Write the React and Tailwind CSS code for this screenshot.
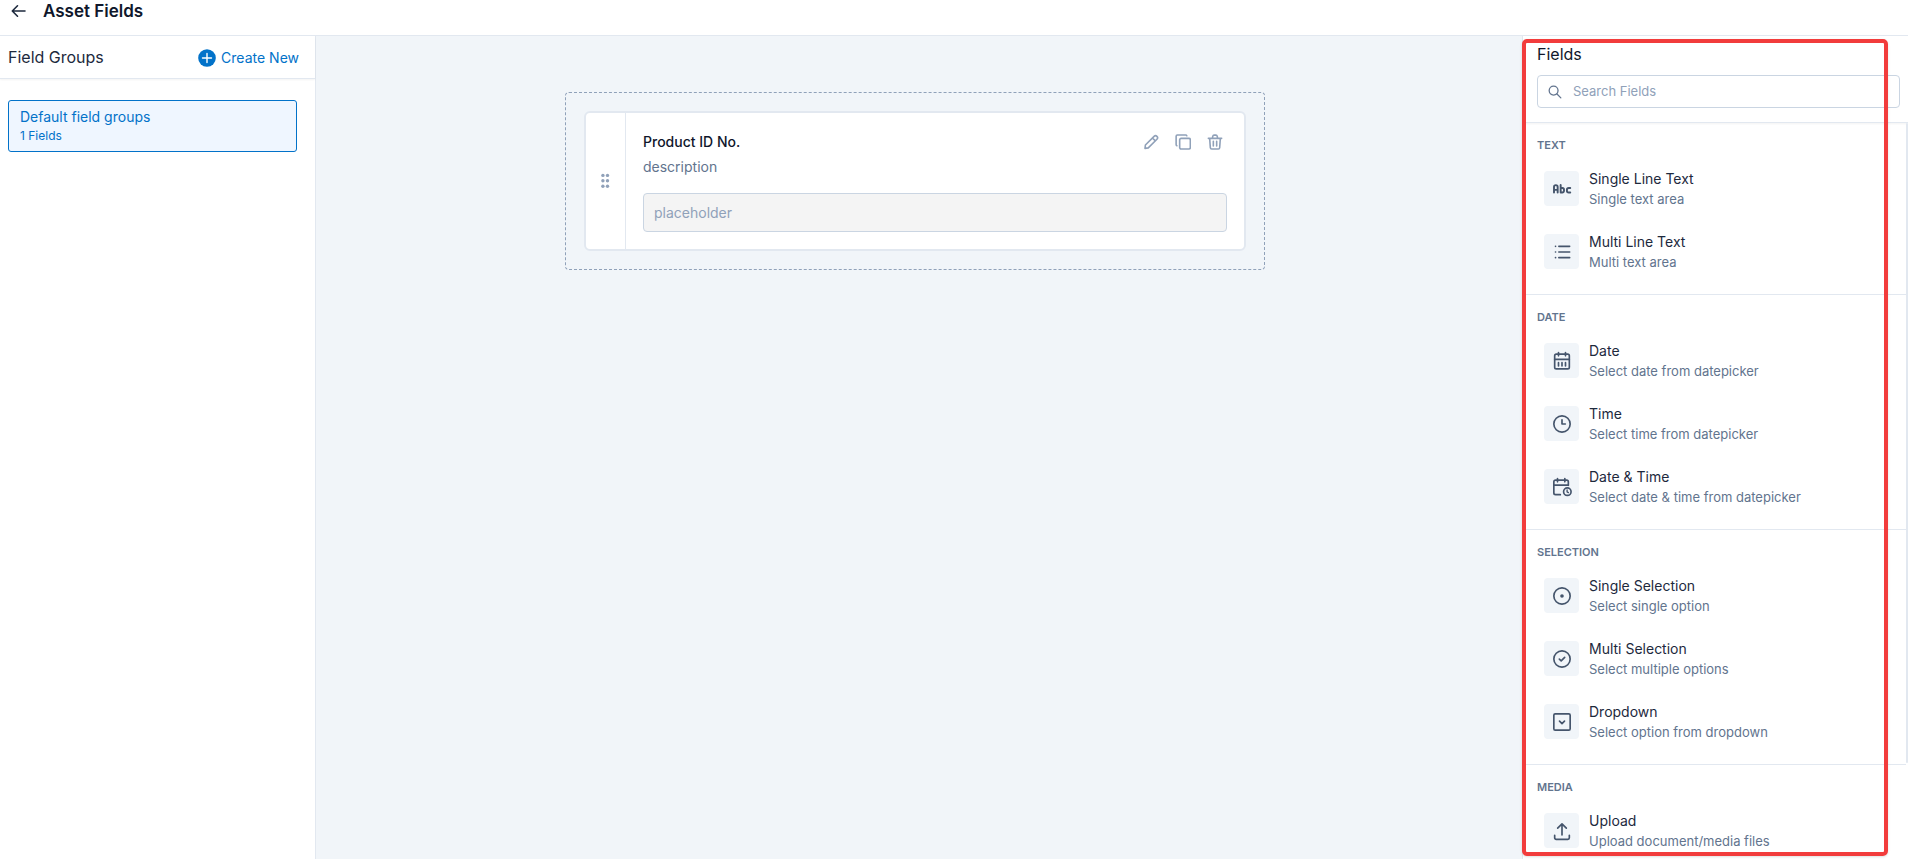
import React, { useState } from "react";
import clsx from "clsx";

function Icon({ className = "w-5 h-5", strokeWidth = 2, children }) {
  return (
    <svg
      className={className}
      viewBox="0 0 24 24"
      fill="none"
      stroke="currentColor"
      strokeWidth={strokeWidth}
      strokeLinecap="round"
      strokeLinejoin="round"
      aria-hidden="true"
    >
      {children}
    </svg>
  );
}

const AbcIcon = () => (
  <Icon strokeWidth={2.3}>
    <path d="M2.4 16.2V9.5a2.2 2.2 0 0 1 4.4 0v6.7M2.4 13h4.4" />
    <path d="M10.4 7.2v9M10.4 10.8h2a2 2 0 0 1 2 2v1.4a2 2 0 0 1-2 2h-2" />
    <path d="M21.9 10.8h-1.8a2.2 2.2 0 0 0-2.2 2.2v1a2.2 2.2 0 0 0 2.2 2.2h1.8" />
  </Icon>
);

const ListIcon = () => (
  <Icon>
    <path d="M8.2 5.2h13M8.2 12h13M8.2 18.8h13" />
    <path d="M4.2 5.2h.1M4.2 12h.1M4.2 18.8h.1" />
  </Icon>
);

const CalendarIcon = () => (
  <Icon>
    <rect x="3.2" y="3.8" width="17.6" height="17.6" rx="2" />
    <path d="M3.2 10h17.6M7.8 1.8v4M16.2 1.8v4M7.8 14v4M12 14v4M16.2 14v4" />
  </Icon>
);

const ClockIcon = () => (
  <Icon>
    <circle cx="12" cy="12" r="9.8" />
    <path d="M12 7v5h4" />
  </Icon>
);

const CalendarClockIcon = () => (
  <Icon>
    <path d="M10 21.2H4.2a2 2 0 0 1-2-2V5.8a2 2 0 0 1 2-2h13.4a2 2 0 0 1 2 2V10" />
    <path d="M2.2 9.8h17.4M6.6 1.8v4M15.4 1.8v4" />
    <circle cx="18.4" cy="17.6" r="4.5" />
    <path d="M18.1 15.6v2.3l1.6.9" strokeWidth="1.6" />
  </Icon>
);

const RadioIcon = () => (
  <Icon>
    <circle cx="12" cy="12" r="9.8" />
    <circle cx="12" cy="12" r="1.2" fill="currentColor" />
  </Icon>
);

const CheckCircleIcon = () => (
  <Icon>
    <circle cx="12" cy="12" r="9.8" />
    <path d="M8.8 12.2l2.2 2.1 4.2-4.2" />
  </Icon>
);

const DropdownIcon = () => (
  <Icon>
    <rect x="2.2" y="2.2" width="19.6" height="19.6" rx="1.6" />
    <path d="M9 11l3 3 3-3" />
  </Icon>
);

const UploadIcon = () => (
  <Icon>
    <path d="M3.2 17.2v3a1.8 1.8 0 0 0 1.8 1.8h14a1.8 1.8 0 0 0 1.8-1.8v-3" />
    <path d="M12 16.8V3.6M6.8 8.6L12 3.4l5.2 5.2" />
  </Icon>
);

const PencilIcon = () => (
  <Icon className="w-4 h-4" strokeWidth={2.4}>
    <path d="M3 21.5l.6-5L16.6 3.5a3 3 0 0 1 4.3 4.3L7.9 20.8l-4.9.7zM14.2 6l4.3 4.3" />
  </Icon>
);

const CopyIcon = () => (
  <Icon className="w-4 h-4" strokeWidth={2.4}>
    <rect x="7" y="6.5" width="16" height="16" rx="2.2" />
    <path d="M2.8 17.5a1.8 1.8 0 0 1-1.1-1.7V3.3a1.8 1.8 0 0 1 1.8-1.8H16a1.8 1.8 0 0 1 1.7 1.1" />
  </Icon>
);

const TrashIcon = () => (
  <Icon className="w-4 h-4" strokeWidth={2.4}>
    <path d="M2 6.5h20M4 6.5l1 14a2 2 0 0 0 2 1.9h10a2 2 0 0 0 2-1.9l1-14M8 6.5l.7-3.3a2 2 0 0 1 1.9-1.5h2.8a2 2 0 0 1 1.9 1.5l.7 3.3M9.5 11v7M14.5 11v7" />
  </Icon>
);

const fieldSections = [
  {
    title: "Text",
    fields: [
      { name: "Single Line Text", description: "Single text area", icon: AbcIcon },
      { name: "Multi Line Text", description: "Multi text area", icon: ListIcon },
    ],
  },
  {
    title: "Date",
    fields: [
      { name: "Date", description: "Select date from datepicker", icon: CalendarIcon },
      { name: "Time", description: "Select time from datepicker", icon: ClockIcon },
      { name: "Date & Time", description: "Select date & time from datepicker", icon: CalendarClockIcon },
    ],
  },
  {
    title: "Selection",
    fields: [
      { name: "Single Selection", description: "Select single option", icon: RadioIcon },
      { name: "Multi Selection", description: "Select multiple options", icon: CheckCircleIcon },
      { name: "Dropdown", description: "Select option from dropdown", icon: DropdownIcon },
    ],
  },
  {
    title: "Media",
    fields: [
      { name: "Upload", description: "Upload document/media files", icon: UploadIcon },
    ],
  },
];

const fieldActions = [
  { label: "Edit field", icon: PencilIcon },
  { label: "Duplicate field", icon: CopyIcon },
  { label: "Delete field", icon: TrashIcon },
];

function Header() {
  return (
    <header className="flex h-9 shrink-0 items-start gap-[15px] border-b border-slate-200 bg-white pl-2">
      <button type="button" aria-label="Back" className="flex h-[22px] w-5 items-center justify-center text-slate-800">
        <svg className="h-4 w-4" viewBox="0 0 16 16" fill="none" stroke="currentColor" strokeWidth="1.6" strokeLinecap="round" strokeLinejoin="round" aria-hidden="true">
          <path d="M15 8H2.5M7.5 2.8L2.3 8l5.2 5.2" />
        </svg>
      </button>
      <h1 className="text-[17px] leading-[22px] font-semibold text-slate-900">Asset Fields</h1>
    </header>
  );
}

function GroupsPanel() {
  return (
    <aside className="flex w-[316px] shrink-0 flex-col border-r border-slate-200 bg-white">
      <div className="flex h-[43px] items-center justify-between border-b border-slate-200 pr-4 pl-2 shadow-xs">
        <h2 className="text-base leading-5 text-slate-800">Field Groups</h2>
        <button type="button" className="flex items-center gap-[5px] pt-px text-sm text-[#0272c9]">
          <svg className="h-[18px] w-[18px]" viewBox="0 0 18 18" aria-hidden="true">
            <circle cx="9" cy="9" r="8.8" fill="currentColor" />
            <path d="M9 4.5v9M4.5 9h9" stroke="#fff" strokeWidth="1.4" strokeLinecap="round" />
          </svg>
          Create New
        </button>
      </div>
      <button
        type="button"
        className="mt-[21px] mr-[18px] ml-2 flex flex-col rounded-[3px] border border-[#0272c9] bg-blue-50 px-[11px] py-[6px] text-left text-[#0272c9]"
      >
        <span className="text-sm">Default field groups</span>
        <span className="text-xs leading-[18px]">1 Fields</span>
      </button>
    </aside>
  );
}

function FieldCard() {
  return (
    <div className="flex rounded-md border-2 border-slate-200 bg-white">
      <div className="flex w-10 shrink-0 items-center justify-center border-r border-slate-200 text-slate-400">
        <svg className="h-4 w-[9px]" viewBox="0 0 9 16" fill="currentColor" aria-hidden="true">
          <circle cx="1.9" cy="2.4" r="1.7" />
          <circle cx="6.5" cy="2.4" r="1.7" />
          <circle cx="1.9" cy="7.8" r="1.7" />
          <circle cx="6.5" cy="7.8" r="1.7" />
          <circle cx="1.9" cy="13.2" r="1.7" />
          <circle cx="6.5" cy="13.2" r="1.7" />
        </svg>
      </div>
      <div className="flex-1 p-[17px]">
        <div className="flex items-start justify-between">
          <div>
            <label htmlFor="product-id" className="block text-sm leading-6 font-medium text-slate-900">
              Product ID No.
            </label>
            <p className="text-sm leading-[26px] text-slate-500">description</p>
          </div>
          <div className="flex gap-4 pt-1 pr-1 text-slate-400">
            {fieldActions.map((action) => (
              <button key={action.label} type="button" aria-label={action.label}>
                <action.icon />
              </button>
            ))}
          </div>
        </div>
        <input
          id="product-id"
          type="text"
          disabled
          placeholder="placeholder"
          className="mt-[13px] block h-[39px] w-full rounded border border-slate-300 bg-[#f4f4f4] px-[10px] text-sm placeholder:text-slate-400"
        />
      </div>
    </div>
  );
}

function FieldItem({ field }) {
  return (
    <li className="flex h-[63px] items-center gap-[10px] pl-[21px]">
      <span className="flex h-[35px] w-[35px] items-center justify-center rounded bg-slate-100 text-slate-600">
        <field.icon />
      </span>
      <div>
        <p className="text-sm text-slate-800">{field.name}</p>
        <p className="text-[13px] leading-5 text-slate-500">{field.description}</p>
      </div>
    </li>
  );
}

function FieldsPanel() {
  const [search, setSearch] = useState("");
  const query = search.trim().toLowerCase();

  return (
    <aside className="flex w-[386px] shrink-0 flex-col border-l border-slate-200 bg-white">
      <div className="shrink-0 border-b border-slate-200 pt-[6px] pr-2 pb-[14px] pl-[14px] shadow-xs">
        <label htmlFor="search-fields" className="block text-base text-slate-900">
          Fields
        </label>
        <div className="mt-[9px] flex h-[33px] items-center gap-[11px] rounded border border-slate-300 pl-[10px] text-slate-500">
          <Icon className="h-[14px] w-[14px]" strokeWidth={2.2}>
            <circle cx="9.6" cy="9.6" r="7.6" />
            <path d="M15.4 15.4l6.6 6.6" />
          </Icon>
          <input
            id="search-fields"
            type="text"
            value={search}
            onChange={(e) => setSearch(e.target.value)}
            placeholder="Search Fields"
            className="min-w-0 flex-1 bg-transparent text-[13px] text-slate-800 outline-none placeholder:text-slate-400"
          />
        </div>
      </div>
      <div className="flex min-h-0 flex-1">
        <div className="min-w-0 flex-1 overflow-hidden">
          {fieldSections.map((section, index) => (
            <section
              key={section.title}
              className={clsx("pt-3 pb-[11px]", index < fieldSections.length - 1 && "border-b border-slate-200")}
            >
              <h3 className="pb-[2px] pl-[14px] text-[11px] leading-5 font-semibold text-slate-500 uppercase">
                {section.title}
              </h3>
              <ul>
                {section.fields
                  .filter((field) => field.name.toLowerCase().includes(query))
                  .map((field) => (
                    <FieldItem key={field.name} field={field} />
                  ))}
              </ul>
            </section>
          ))}
        </div>
        {/* Scroll thumb */}
        <div className="h-[87%] w-0.5 rounded-full bg-slate-200" />
      </div>
    </aside>
  );
}

export default function App() {
  return (
    <div className="relative flex h-screen flex-col overflow-hidden bg-white font-['Inter','Liberation_Sans',sans-serif]">
      <Header />
      <div className="flex min-h-0 flex-1">
        <GroupsPanel />
        <main className="flex-1 bg-slate-100 pt-14 pr-2">
          <div className="mx-auto max-w-[700px] rounded border border-dashed border-slate-400 p-[18px]">
            <FieldCard />
          </div>
        </main>
        <FieldsPanel />
      </div>
      {/* Highlight around the fields list */}
      <div className="pointer-events-none absolute top-[39px] right-5 bottom-[3px] w-[366px] rounded-[5px] border-4 border-[#f23c3c] shadow-sm" />
    </div>
  );
}
